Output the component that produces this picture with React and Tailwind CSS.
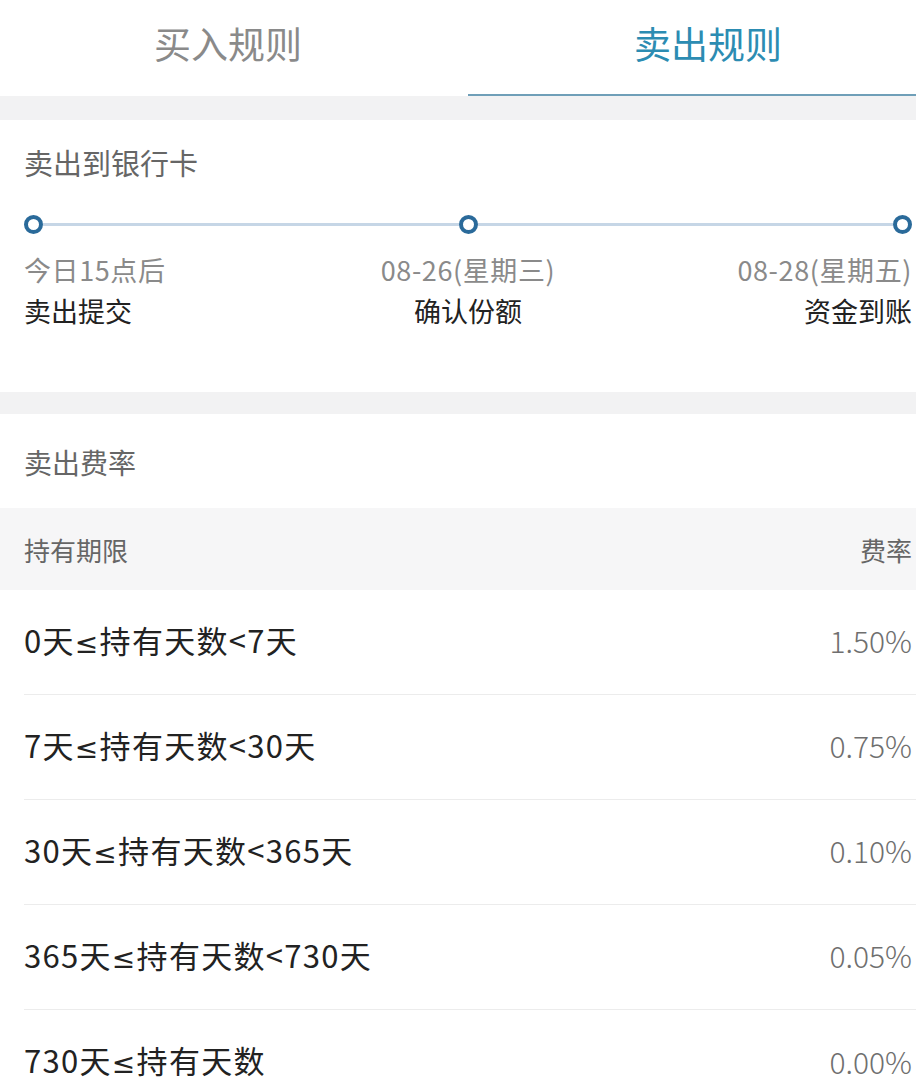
const rows = [
  ['0天', '持有天数<7天', '1.50%'],
  ['7天', '持有天数<30天', '0.75%'],
  ['30天', '持有天数<365天', '0.10%'],
  ['365天', '持有天数<730天', '0.05%'],
  ['730天', '持有天数', '0.00%'],
];

function Dot() {
  return <span className="w-[19px] h-[19px] rounded-full border-[4px] border-[#2a6a9a] bg-white shrink-0" />;
}

export default function App() {
  return (
    <div
      className="w-[916px] h-[1080px] overflow-hidden bg-white"
      style={{ fontFamily: '"Noto Sans CJK SC", "Noto Sans", sans-serif' }}
    >
      {/* tabs */}
      <div className="flex h-[96px]">
        <div className="w-[456px] flex items-center justify-center text-[37px] text-[#8a8a8a] pb-[8px]">买入规则</div>
        <div className="ml-[12px] flex-1 flex items-center justify-center text-[37px] text-[#2c8cb2] border-b-[2px] border-[#6f9fb8] pb-[6px] pl-[32px]">
          卖出规则
        </div>
      </div>
      <div className="h-[24px] bg-[#f2f2f3]" />

      {/* sell to bank card */}
      <div className="h-[272px] pl-[24px] pr-[4px]">
        <div className="pt-[22px] text-[29px] text-[#666] leading-[40px]">卖出到银行卡</div>
        <div className="mt-[33px] flex items-center">
          <Dot />
          <div className="flex-1 h-[3px] bg-[#c6d6e6]" />
          <Dot />
          <div className="flex-1 h-[3px] bg-[#c6d6e6]" />
          <Dot />
        </div>
        <div className="grid grid-cols-3 mt-[18px] text-[27px] tracking-[0.6px] text-[#8a8a8a] leading-[36px]">
          <div>今日15点后</div>
          <div className="text-center">08-26(星期三)</div>
          <div className="text-right">08-28(星期五)</div>
        </div>
        <div className="grid grid-cols-3 mt-[4px] text-[27px] text-[#222] leading-[38px]">
          <div>卖出提交</div>
          <div className="text-center">确认份额</div>
          <div className="text-right">资金到账</div>
        </div>
      </div>
      <div className="h-[22px] bg-[#f2f2f3]" />

      {/* fees */}
      <div className="h-[94px] flex items-center pl-[24px] pt-[2px] text-[28px] text-[#666]">卖出费率</div>
      <div className="h-[82px] bg-[#f6f6f7] flex items-center justify-between pl-[24px] pr-[4px] text-[26px] text-[#666]">
        <span>持有期限</span>
        <span>费率</span>
      </div>
      {rows.map(([from, rest, rate], i) => (
        <div key={i} className="pl-[24px]">
          <div
            className={
              'h-[105px] flex items-center justify-between pr-[4px] pb-[3px] ' +
              (i < rows.length - 1 ? 'border-b border-[#ececec]' : '')
            }
          >
            <span className="text-[31px] text-[#222] tracking-[1.3px]">
              {from}
              <span style={{ fontFamily: '"DejaVu Sans", sans-serif' }} className="text-[28px]">≤</span>
              {rest}
            </span>
            <span className="text-[30px] text-[#6f6f6f] font-light">{rate}</span>
          </div>
        </div>
      ))}
    </div>
  );
}
